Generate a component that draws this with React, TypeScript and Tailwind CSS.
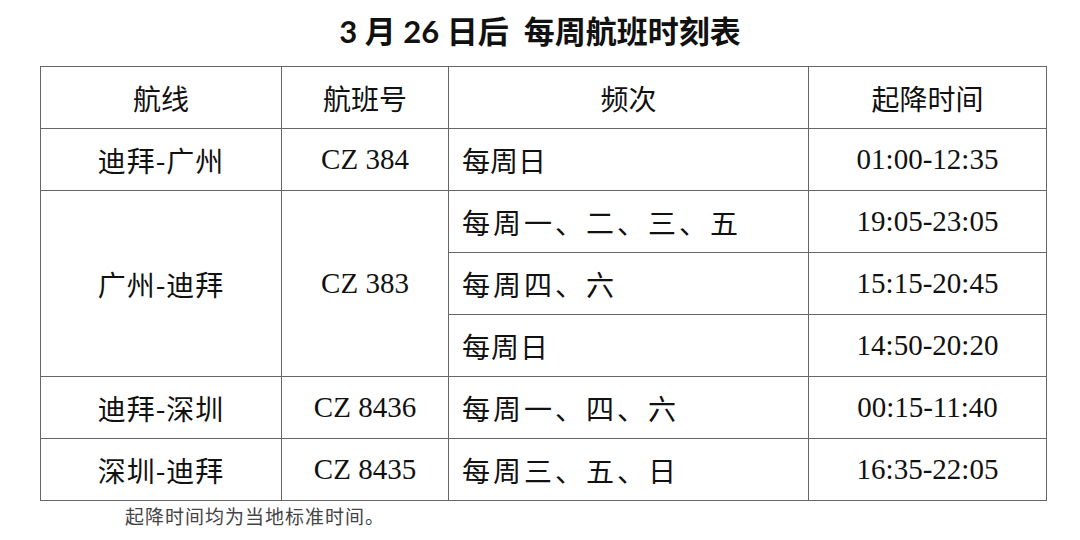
import React from 'react'

const cjk = "font-['Noto_Sans_CJK_SC',sans-serif]"
const num = "font-['Liberation_Serif','Noto_Sans_CJK_SC',serif] text-[29px]"

function Cell({ children, className = '', rowSpan, left }: { children: React.ReactNode; className?: string; rowSpan?: number; left?: boolean }) {
  return (
    <td
      rowSpan={rowSpan}
      className={`border-[1.5px] border-[#666] h-[62px] p-0 align-middle text-[#111] ${left ? 'text-left pl-[13px]' : 'text-center'} ${className}`}
    >
      {children}
    </td>
  )
}

export default function App() {
  return (
    <div className="w-[1080px] h-[540px] bg-white overflow-hidden">
      {/* Title */}
      <div className="h-[66px] flex items-center justify-center pb-[4px]">
        <h1 className="text-[31px] font-bold text-[#111] leading-none font-['Lato','Noto_Sans_CJK_SC',sans-serif]">
          3 月 26 日后&nbsp; 每周航班时刻表
        </h1>
      </div>

      <table className={`ml-[40px] w-[1006px] table-fixed border-collapse text-[28px] leading-none ${cjk}`}>
        <colgroup>
          <col className="w-[241px]" />
          <col className="w-[167px]" />
          <col className="w-[360px]" />
          <col className="w-[238px]" />
        </colgroup>
        <tbody>
          <tr>
            <Cell>航线</Cell>
            <Cell>航班号</Cell>
            <Cell>频次</Cell>
            <Cell>起降时间</Cell>
          </tr>
          <tr>
            <Cell className="tracking-[1px]">迪拜-广州</Cell>
            <Cell className={num}>CZ 384</Cell>
            <Cell left>每周日</Cell>
            <Cell className={num}>01:00-12:35</Cell>
          </tr>
          <tr>
            <Cell rowSpan={3} className="tracking-[1px]">广州-迪拜</Cell>
            <Cell rowSpan={3} className={num}>CZ 383</Cell>
            <Cell left className="tracking-[3px]">每周一、二、三、五</Cell>
            <Cell className={num}>19:05-23:05</Cell>
          </tr>
          <tr>
            <Cell left className="tracking-[3px]">每周四、六</Cell>
            <Cell className={num}>15:15-20:45</Cell>
          </tr>
          <tr>
            <Cell left className="tracking-[1px]">每周日</Cell>
            <Cell className={num}>14:50-20:20</Cell>
          </tr>
          <tr>
            <Cell className="tracking-[1px]">迪拜-深圳</Cell>
            <Cell className={num}>CZ 8436</Cell>
            <Cell left className="tracking-[3px]">每周一、四、六</Cell>
            <Cell className={num}>00:15-11:40</Cell>
          </tr>
          <tr>
            <Cell className="tracking-[1px]">深圳-迪拜</Cell>
            <Cell className={num}>CZ 8435</Cell>
            <Cell left className="tracking-[3px]">每周三、五、日</Cell>
            <Cell className={num}>16:35-22:05</Cell>
          </tr>
        </tbody>
      </table>

      <p className={`pl-[125px] pt-[5px] text-[19px] tracking-[1px] leading-none text-[#444] ${cjk}`}>
        起降时间均为当地标准时间。
      </p>
    </div>
  )
}
